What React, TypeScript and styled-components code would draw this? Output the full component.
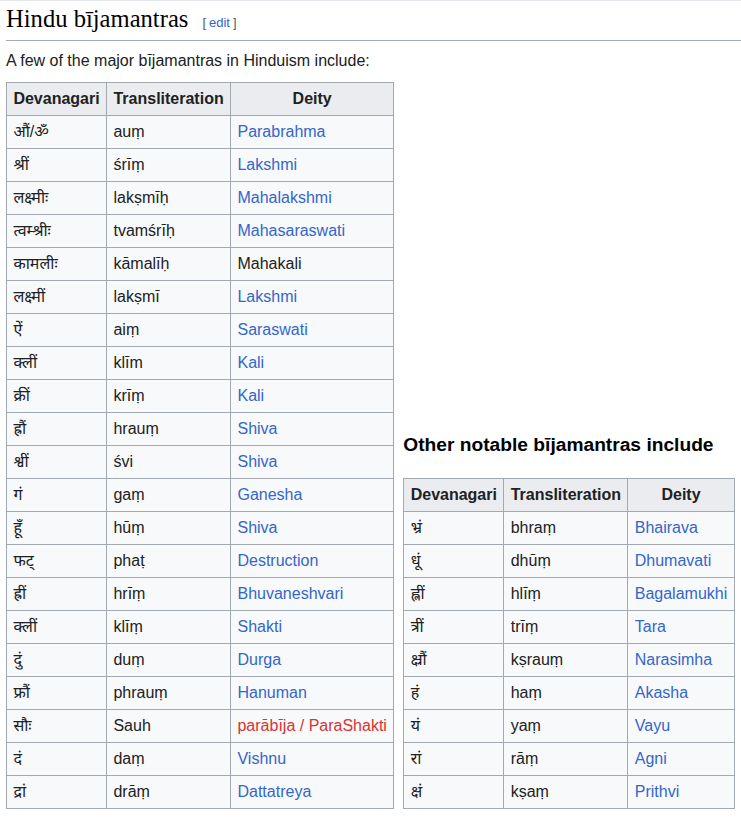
import React from "react";
import styled, { createGlobalStyle } from "styled-components";

const Global = createGlobalStyle`
  html, body { margin: 0; padding: 0; background: #ffffff; }
  body {
    font-family: "Liberation Sans", Arial, "Noto Sans Devanagari", "Lohit Devanagari", sans-serif;
    font-size: 16px;
    color: #202122;
  }
`;

const Page = styled.div`
  border-top: 1px solid #e3e6ea;
  padding-left: 6px;
  width: 735px;
`;

const Heading = styled.h2`
  margin: 0;
  padding: 2px 0 6px 0;
  height: 31px;
  font-family: "Liberation Serif", "Times New Roman", serif;
  font-weight: normal;
  font-size: 24.6px;
  line-height: 31px;
  color: #000000;
  border-bottom: 1px solid #a2a9b1;
  overflow: hidden;
`;

const EditSection = styled.span`
  margin-left: 14px;
  font-family: "Liberation Sans", Arial, sans-serif;
  font-size: 13px;
  line-height: 1;
  color: #54595d;
  vertical-align: baseline;
`;

const EditLink = styled.a`
  color: #3366cc;
  text-decoration: none;
  margin: 0 3px;
`;

const Intro = styled.p`
  margin: 7px 0 8px 0;
  line-height: 1.6;
`;

const Row = styled.div`
  display: flex;
  align-items: flex-end;
  gap: 9px;
`;

const Side = styled.div`
  display: flex;
  flex-direction: column;
`;

const SubHeading = styled.h3`
  margin: 0 0 17px 0;
  font-size: 19.2px;
  font-weight: bold;
  line-height: 1.6;
  color: #000000;
`;

const Table = styled.table`
  border-collapse: collapse;
  background: #f8f9fa;
  color: #202122;
  border: 1px solid #a2a9b1;
`;

const Th = styled.th`
  border: 1px solid #a2a9b1;
  background: #eaecf0;
  padding: 3.2px 6.4px;
  line-height: 25.6px;
  height: 25.6px;
  text-align: center;
  font-weight: bold;
  white-space: nowrap;
`;

const Td = styled.td`
  border: 1px solid #a2a9b1;
  padding: 3.2px 6.4px 3.23px 6.4px;
  height: 25.6px;
  line-height: 25.6px;
  white-space: nowrap;
  vertical-align: middle;
`;

const Link = styled.a<{ $kind?: "red" | "plain" }>`
  text-decoration: none;
  color: ${(p) =>
    p.$kind === "red" ? "#d73333" : p.$kind === "plain" ? "#202122" : "#3366cc"};
`;

type Entry = [string, string, string, ("red" | "plain")?];

const major: Entry[] = [
  ["औं/ॐ", "auṃ", "Parabrahma"],
  ["श्रीं", "śrīṃ", "Lakshmi"],
  ["लक्ष्मीः", "lakṣmīḥ", "Mahalakshmi"],
  ["त्वम्श्रीः", "tvamśrīḥ", "Mahasaraswati"],
  ["कामलीः", "kāmalīḥ", "Mahakali", "plain"],
  ["लक्ष्मीं", "lakṣmī", "Lakshmi"],
  ["ऐं", "aiṃ", "Saraswati"],
  ["क्लीं", "klīm", "Kali"],
  ["क्रीं", "krīṃ", "Kali"],
  ["ह्रौं", "hrauṃ", "Shiva"],
  ["श्वीं", "śvi", "Shiva"],
  ["गं", "gaṃ", "Ganesha"],
  ["हूँ", "hūṃ", "Shiva"],
  ["फट्", "phaṭ", "Destruction"],
  ["ह्रीं", "hrīṃ", "Bhuvaneshvari"],
  ["क्लीं", "klīṃ", "Shakti"],
  ["दुं", "duṃ", "Durga"],
  ["फ्रौं", "phrauṃ", "Hanuman"],
  ["सौः", "Sauh", "parābīja / ParaShakti", "red"],
  ["दं", "daṃ", "Vishnu"],
  ["द्रां", "drāṃ", "Dattatreya"],
];

const other: Entry[] = [
  ["भ्रं", "bhraṃ", "Bhairava"],
  ["धूं", "dhūṃ", "Dhumavati"],
  ["ह्लीं", "hlīṃ", "Bagalamukhi"],
  ["त्रीं", "trīṃ", "Tara"],
  ["क्ष्रौं", "kṣrauṃ", "Narasimha"],
  ["हं", "haṃ", "Akasha"],
  ["यं", "yaṃ", "Vayu"],
  ["रां", "rāṃ", "Agni"],
  ["क्षं", "kṣaṃ", "Prithvi"],
];

function MantraTable({ rows }: { rows: Entry[] }) {
  return (
    <Table>
      <thead>
        <tr>
          <Th>Devanagari</Th>
          <Th>Transliteration</Th>
          <Th>Deity</Th>
        </tr>
      </thead>
      <tbody>
        {rows.map(([dev, tr, deity, kind], i) => (
          <tr key={i}>
            <Td>{dev}</Td>
            <Td>{tr}</Td>
            <Td>
              {kind === "plain" ? deity : <Link href="#" $kind={kind}>{deity}</Link>}
            </Td>
          </tr>
        ))}
      </tbody>
    </Table>
  );
}

export default function App() {
  return (
    <Page>
      <Global />
      <Heading>
        Hindu bījamantras
        <EditSection>
          [<EditLink href="#">edit</EditLink>]
        </EditSection>
      </Heading>
      <Intro>A few of the major bījamantras in Hinduism include:</Intro>
      <Row>
        <MantraTable rows={major} />
        <Side>
          <SubHeading>Other notable bījamantras include</SubHeading>
          <MantraTable rows={other} />
        </Side>
      </Row>
    </Page>
  );
}
